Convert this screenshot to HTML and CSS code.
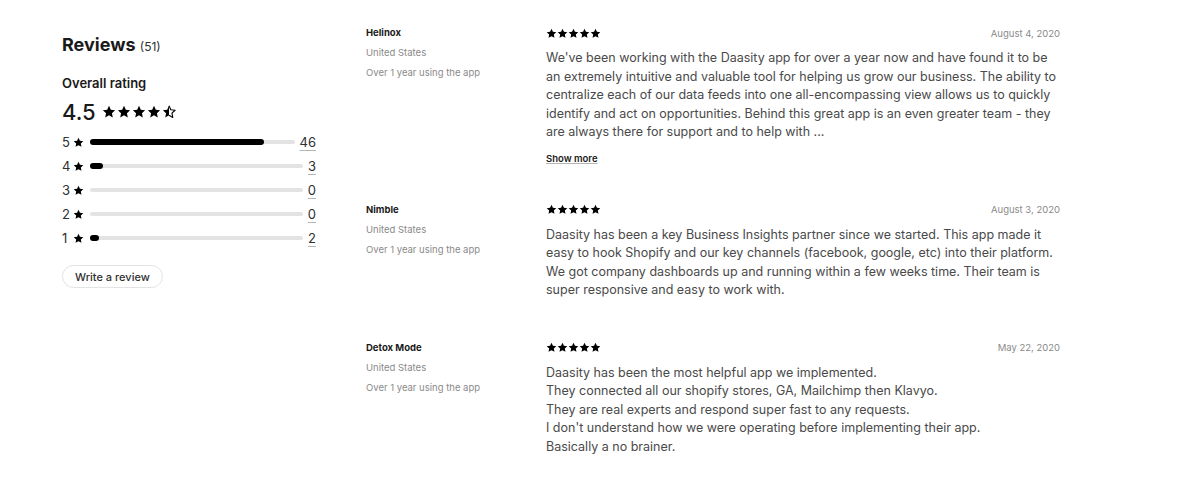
FILE: index.html
```html
<!DOCTYPE html>
<html lang="en">
<head>
    <meta charset="UTF-8">
    <title>Reviews</title>
    <link rel="stylesheet" href="styles.css">
</head>
<body>
    <svg width="0" height="0" style="position:absolute">
        <defs>
            <symbol id="star" viewBox="0 0 20 20">
                <path d="M10 1.2l2.6 5.6 6.1.7-4.5 4.2 1.2 6.1L10 14.8l-5.4 3 1.2-6.1L1.3 7.5l6.1-.7z"/>
            </symbol>
            <symbol id="star-half" viewBox="0 0 20 20">
                <path d="M10 1.2v13.6l-5.4 3 1.2-6.1L1.3 7.5l6.1-.7z"/>
                <path d="M10 1.2l2.6 5.6 6.1.7-4.5 4.2 1.2 6.1L10 14.8" fill="none" stroke="currentColor" stroke-width="1.6" stroke-linejoin="round"/>
            </symbol>
        </defs>
    </svg>

    <div class="page">
        <!-- сводка по оценкам -->
        <aside class="summary">
            <h2 class="summary-title">Reviews <span class="summary-count">(51)</span></h2>
            <div class="overall-label">Overall rating</div>
            <div class="overall">
                <span class="overall-value">4.5</span>
                <span class="stars stars-lg">
                    <svg><use href="#star"/></svg><svg><use href="#star"/></svg><svg><use href="#star"/></svg><svg><use href="#star"/></svg><svg><use href="#star-half"/></svg>
                </span>
            </div>
            <ul class="dist" id="dist"></ul>
            <button class="write-btn">Write a review</button>
        </aside>

        <!-- список отзывов -->
        <section class="reviews">
            <article class="review">
                <div class="author">
                    <div class="author-name">Helinox</div>
                    <div class="author-meta">United States</div>
                    <div class="author-meta">Over 1 year using the app</div>
                </div>
                <div class="review-body">
                    <div class="review-head">
                        <span class="stars stars-sm"><svg><use href="#star"/></svg><svg><use href="#star"/></svg><svg><use href="#star"/></svg><svg><use href="#star"/></svg><svg><use href="#star"/></svg></span>
                        <span class="review-date">August 4, 2020</span>
                    </div>
                    <p class="review-text">We've been working with the Daasity app for over a year now and have found it to be an extremely intuitive and valuable tool for helping us grow our business. The ability to centralize each of our data feeds into one all-encompassing view allows us to quickly identify and act on opportunities. Behind this great app is an even greater team - they are always there for support and to help with ...</p>
                    <a class="show-more" href="#">Show more</a>
                </div>
            </article>

            <article class="review">
                <div class="author">
                    <div class="author-name">Nimble</div>
                    <div class="author-meta">United States</div>
                    <div class="author-meta">Over 1 year using the app</div>
                </div>
                <div class="review-body">
                    <div class="review-head">
                        <span class="stars stars-sm"><svg><use href="#star"/></svg><svg><use href="#star"/></svg><svg><use href="#star"/></svg><svg><use href="#star"/></svg><svg><use href="#star"/></svg></span>
                        <span class="review-date">August 3, 2020</span>
                    </div>
                    <p class="review-text">Daasity has been a key Business Insights partner since we started. This app made it easy to hook Shopify and our key channels (facebook, google, etc) into their platform. We got company dashboards up and running within a few weeks time. Their team is super responsive and easy to work with.</p>
                </div>
            </article>

            <article class="review">
                <div class="author">
                    <div class="author-name">Detox Mode</div>
                    <div class="author-meta">United States</div>
                    <div class="author-meta">Over 1 year using the app</div>
                </div>
                <div class="review-body">
                    <div class="review-head">
                        <span class="stars stars-sm"><svg><use href="#star"/></svg><svg><use href="#star"/></svg><svg><use href="#star"/></svg><svg><use href="#star"/></svg><svg><use href="#star"/></svg></span>
                        <span class="review-date">May 22, 2020</span>
                    </div>
                    <p class="review-text">Daasity has been the most helpful app we implemented.<br>They connected all our shopify stores, GA, Mailchimp then Klavyo.<br>They are real experts and respond super fast to any requests.<br>I don't understand how we were operating before implementing their app.<br>Basically a no brainer.</p>
                </div>
            </article>
        </section>
    </div>

    <script>
        // распределение оценок: звёзды, количество, ширина полосы в %
        const ratings = [[5, 46, 85], [4, 3, 6], [3, 0, 0], [2, 0, 0], [1, 2, 4]];
        const dist = document.getElementById('dist');

        ratings.forEach(([stars, n, pct]) => {
            const li = document.createElement('li');
            li.className = 'dist-row';
            li.innerHTML =
                '<span class="dist-num">' + stars + '</span>' +
                '<svg class="dist-star"><use href="#star"/></svg>' +
                '<span class="dist-bar"><span class="dist-fill" style="width:' + pct + '%"></span></span>' +
                '<a class="dist-count" href="#">' + n + '</a>';
            dist.appendChild(li);
        });
    </script>
</body>
</html>
```

FILE: styles.css
```css
body {
    margin: 0;
    background: #ffffff;
    color: #303030;
    font-family: Inter, "Noto Sans", sans-serif;
}

.page {
    display: flex;
    padding: 27px 0 0 62px;
}

/* левая колонка */
.summary {
    width: 254px;
    flex-shrink: 0;
    margin-right: 50px;
}

.summary-title {
    margin: 6px 0 0;
    font-size: 18px;
    font-weight: 700;
    color: #1a1a1a;
    line-height: 24px;
}

.summary-count {
    font-size: 12px;
    font-weight: 400;
    color: #303030;
}

.overall-label {
    margin-top: 15px;
    font-size: 13px;
    font-weight: 600;
    color: #1a1a1a;
    line-height: 18px;
}

.overall {
    display: flex;
    align-items: center;
    margin-top: 7px;
    height: 26px;
}

.overall-value {
    font-size: 22px;
    font-weight: 500;
    color: #1a1a1a;
    margin-right: 6px;
}

.stars {
    display: inline-flex;
    color: #000000;
}

.stars svg {
    fill: currentColor;
}

.stars-lg svg {
    width: 14px;
    height: 14px;
    margin-right: 1px;
}

.stars-sm svg {
    width: 11px;
    height: 11px;
    margin-right: 0;
}

.dist {
    list-style: none;
    margin: 5px 0 0;
    padding: 0;
}

.dist-row {
    display: flex;
    align-items: center;
    height: 24px;
    font-size: 13px;
    color: #303030;
}

.dist-num {
    width: 8px;
}

.dist-star {
    width: 11px;
    height: 11px;
    margin-left: 3px;
    fill: #000000;
}

.dist-bar {
    flex: 1;
    height: 4px;
    margin: 0 5px 0 6px;
    background: #e3e3e3;
    border-radius: 2px;
    position: relative;
}

.dist-fill {
    position: absolute;
    left: 0;
    top: -1px;
    height: 6px;
    background: #000000;
    border-radius: 3px;
}

.dist-count {
    color: #303030;
    text-decoration: underline;
    text-decoration-color: #b5b5b5;
    text-underline-offset: 3px;
}

.write-btn {
    margin-top: 15px;
    padding: 0 12px;
    height: 23px;
    border: 1px solid #e3e3e3;
    border-radius: 12px;
    background: #ffffff;
    font-family: Inter, "Noto Sans", sans-serif;
    font-size: 11px;
    font-weight: 500;
    color: #303030;
    cursor: pointer;
}

/* отзывы */
.reviews {
    width: 694px;
}

.review {
    display: flex;
    margin-bottom: 39px;
}

.author {
    width: 180px;
    flex-shrink: 0;
}

.author-name {
    font-size: 9.5px;
    font-weight: 700;
    color: #1a1a1a;
    line-height: 12px;
}

.author-meta {
    margin-top: 8px;
    font-size: 9.5px;
    color: #8a8a8a;
    line-height: 12px;
}

.review-body {
    flex: 1;
}

.review-head {
    display: flex;
    justify-content: space-between;
    align-items: center;
    height: 12px;
}

.review-date {
    font-size: 9.5px;
    color: #8a8a8a;
}

.review-text {
    margin: 9px 0 0;
    padding-top: 1px;
    font-size: 12.5px;
    line-height: 18.5px;
    color: #4a4a4a;
}

.review-text:last-child {
    margin-bottom: 3px;
}

.show-more {
    display: block;
    width: max-content;
    margin-top: 11px;
    font-size: 9.5px;
    line-height: 12px;
    font-weight: 600;
    color: #1a1a1a;
    text-decoration: underline;
    text-decoration-color: #b5b5b5;
}
```
